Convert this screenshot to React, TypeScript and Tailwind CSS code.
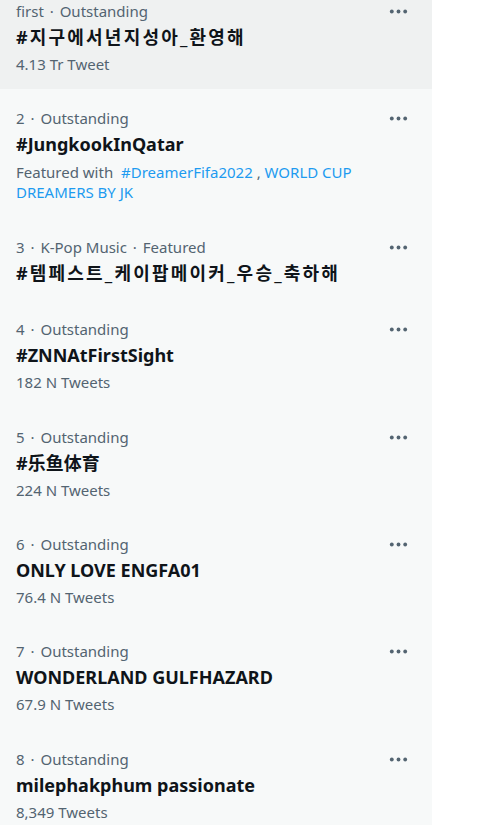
import React from "react";

type Trend = {
    meta: string[];
    title: string;
    count?: string;
    featured?: boolean;
    hover?: boolean;
    korean?: boolean;
};

const trends: Trend[] = [
    {meta: ["first", "Outstanding"], title: "#지구에서년지성아_환영해", count: "4.13 Tr Tweet", hover: true, korean: true},
    {meta: ["2", "Outstanding"], title: "#JungkookInQatar", featured: true},
    {meta: ["3", "K-Pop Music", "Featured"], title: "#템페스트_케이팝메이커_우승_축하해", korean: true},
    {meta: ["4", "Outstanding"], title: "#ZNNAtFirstSight", count: "182 N Tweets"},
    {meta: ["5", "Outstanding"], title: "#乐鱼体育", count: "224 N Tweets"},
    {meta: ["6", "Outstanding"], title: "ONLY LOVE ENGFA01", count: "76.4 N Tweets"},
    {meta: ["7", "Outstanding"], title: "WONDERLAND GULFHAZARD", count: "67.9 N Tweets"},
    {meta: ["8", "Outstanding"], title: "milephakphum passionate", count: "8,349 Tweets"},
];

const MoreIcon = () => (
    <svg viewBox="0 0 24 24" className="w-[23px] h-[23px] -mt-[2px] shrink-0 fill-[#536471]">
        <circle cx="5" cy="12" r="2"/>
        <circle cx="12" cy="12" r="2"/>
        <circle cx="19" cy="12" r="2"/>
    </svg>
);

const TrendItem = ({trend}: { trend: Trend }) => {
    return (
        <div className={`flex justify-between pl-4 pr-[22px] pt-5 pb-[15.4px] ${trend.hover ? "bg-[#eff1f1]" : ""}`}>
            <div>
                <div className="text-[15px] leading-[19px] text-[#536471]">
                    {trend.meta.map((m, i) => (
                        <React.Fragment key={m}>
                            {i > 0 && <span className="px-[2px]"> · </span>}
                            {m}
                        </React.Fragment>
                    ))}
                </div>
                <div
                    className={`mt-[5px] text-[18px] leading-[23px] font-bold text-[#0f1419] ${trend.korean ? "tracking-[2.2px]" : ""}`}>
                    {trend.title}
                </div>
                {trend.count && (
                    <div className="mt-[6px] text-[15px] leading-[19px] text-[#536471]">{trend.count}</div>
                )}
                {trend.featured && (
                    <div className="mt-[6px] text-[15px] leading-[20px] text-[#536471]">
                        Featured with <span className="ml-[4px] text-[#1d9bf0]">#DreamerFifa2022</span> ,{" "}
                        <span className="text-[#1d9bf0]">WORLD CUP<br/>DREAMERS BY JK</span>
                    </div>
                )}
            </div>
            <MoreIcon/>
        </div>
    );
};

export default function App() {
    return (
        <div
            className="h-[825px] overflow-hidden bg-white"
            style={{fontFamily: '"Noto Sans", "Noto Sans CJK KR", "Noto Sans CJK SC", sans-serif'}}
        >
            <div className="flex flex-col w-[432px] h-full bg-[#f7f9f9]">
                <div className="-mt-[18px]">
                    {trends.map((t) => (
                        <TrendItem key={t.title} trend={t}/>
                    ))}
                </div>
            </div>
        </div>
    );
}
